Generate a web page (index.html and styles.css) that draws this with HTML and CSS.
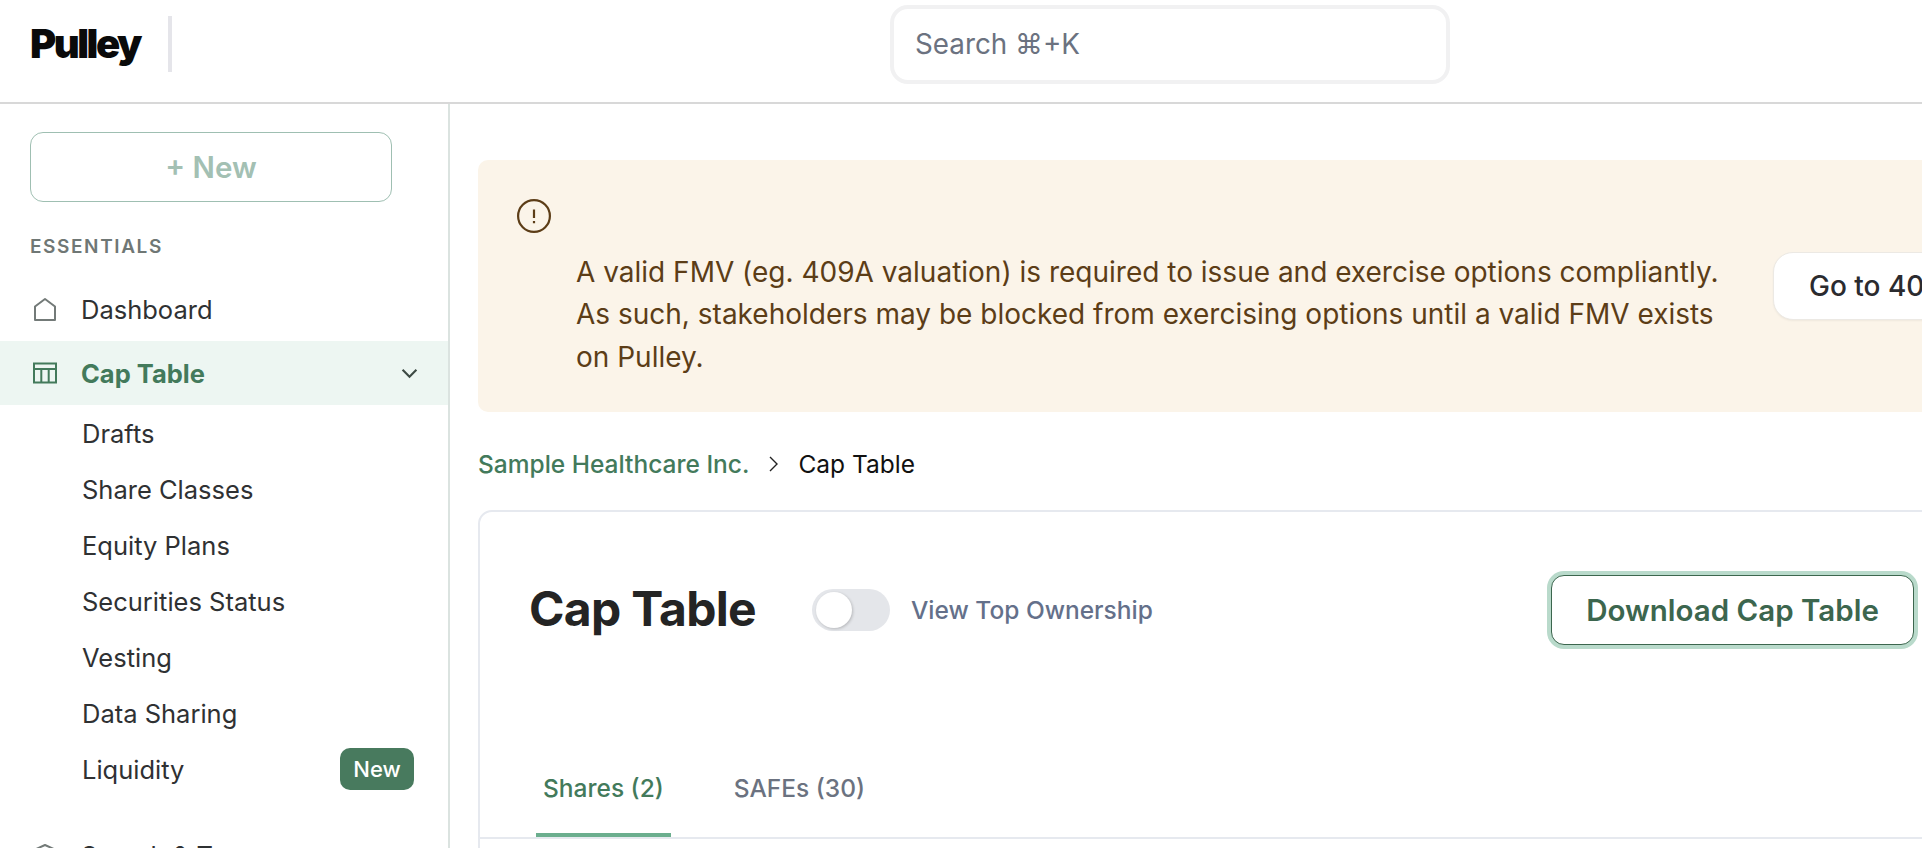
FILE: index.html
```html
<!DOCTYPE html>
<html lang="en">
<head>
<meta charset="utf-8">
<title>Pulley Cap Table</title>
<link rel="stylesheet" href="styles.css">
</head>
<body>
<header class="topbar">
  <div class="brand"><span class="logo">Pulley</span><span class="brand-rule"></span></div>
  <div class="search">Search ⌘+K</div>
</header>
<div class="shell">
  <aside class="sidebar">
    <button class="new-btn">+ New</button>
    <div class="nav-label">ESSENTIALS</div>
    <a class="nav-row first">
      <svg class="nav-icon" viewBox="0 0 24 24" fill="none" stroke="#737a78" stroke-width="2" stroke-linejoin="round"><path d="M2 23V9.500L12 2l10 7.500V23z"/></svg>
      <span>Dashboard</span>
    </a>
    <a class="nav-row active">
      <svg class="nav-icon" viewBox="0 0 24 21" fill="none" stroke="#437a5b" stroke-width="2"><path d="M1 1h22v19H1zM1 6.500h22M8.300 6.500V20M15.700 6.500V20"/></svg>
      <span>Cap Table</span>
      <svg class="chev" viewBox="0 0 16 10" fill="none" stroke="#3d4a44" stroke-width="2"><path d="M1.500 1.500 8 8l6.500-6.500"/></svg>
    </a>
    <ul class="sub">
      <li>Drafts</li>
      <li>Share Classes</li>
      <li>Equity Plans</li>
      <li>Securities Status</li>
      <li>Vesting</li>
      <li>Data Sharing</li>
      <li>Liquidity<span class="badge">New</span></li>
    </ul>
    <a class="nav-row next">
      <svg class="nav-icon" viewBox="0 0 24 24" fill="none" stroke="#737a78" stroke-width="2" stroke-linejoin="round"><path d="M12 2 1 7l11 5 11-5zM5 10v7l7 4 7-4v-7"/></svg>
      <span>Search &amp; Tax</span>
    </a>
  </aside>
  <main class="main">
    <section class="banner">
      <svg class="banner-icon" viewBox="0 0 34 34" fill="none" stroke="#5c3d17" stroke-width="2.200"><circle cx="17" cy="17" r="15.900"/><path d="M17 10.500v8.500M17 22v2.200"/></svg>
      <div class="banner-row">
        <p class="banner-text">A valid FMV (eg. 409A valuation) is required to issue and exercise options compliantly. As such, stakeholders may be blocked from exercising options until a valid FMV exists on Pulley.</p>
        <button class="banner-btn">Go to 409A</button>
      </div>
    </section>
    <nav class="crumbs">
      <a class="crumb-link">Sample Healthcare Inc.</a>
      <svg class="crumb-chev" viewBox="0 0 9 16" fill="none" stroke="#222" stroke-width="1.400"><path d="M1 1l7 7-7 7"/></svg>
      <span class="crumb-cur">Cap Table</span>
    </nav>
    <section class="card">
      <div class="card-head">
        <div class="title-group">
          <h1 class="title">Cap Table</h1>
          <span class="toggle"><span class="knob"></span></span>
          <span class="toggle-label">View Top Ownership</span>
        </div>
        <button class="download">Download Cap Table</button>
      </div>
      <div class="tabs">
        <span class="tab on">Shares (2)</span>
        <span class="tab">SAFEs (30)</span>
      </div>
    </section>
  </main>
</div>
</body>
</html>
```
FILE: styles.css
```css
* { box-sizing: border-box; }
html, body { margin: 0; height: 100%; overflow: hidden; background: #fff; }
body { font-family: Inter, "Liberation Sans", sans-serif; color: #2f3133; width: 1922px; height: 848px; }
button { font-family: inherit; cursor: pointer; }

.topbar { height: 104px; border-bottom: 2px solid #d8d8d8; display: flex; align-items: flex-start; }
.brand { display: flex; align-items: flex-start; padding: 16px 0 0 30px; }
.logo { font-weight: 900; font-size: 40px; letter-spacing: -2.500px; color: #0a0a0a; line-height: 56px; width: 138px; }
.brand-rule { width: 4px; height: 56px; background: #e5e5ea; }
.search { margin: 5px 0 0 718px; width: 560px; height: 79px; border: 4px solid #f1f1f2; border-radius: 18px; padding: 0 21px 2px; display: flex; align-items: center; font-size: 27.800px; color: #6b7280; }

.shell { display: flex; height: 744px; }
.sidebar { width: 450px; flex: none; border-right: 2px solid #dbe3e0; padding-top: 28px; overflow: hidden; }
.new-btn { display: block; margin-left: 30px; width: 362px; height: 70px; background: #fff; border: 1.500px solid #9fbfb2; border-radius: 13px; font-size: 29.500px; font-weight: 600; color: #a3c0b3; }
.nav-label { margin: 34px 0 0 30px; font-size: 19px; font-weight: 600; letter-spacing: 1.600px; color: #6f7775; line-height: 22px; }
.nav-row { display: flex; align-items: center; height: 64px; padding-left: 33px; font-size: 25.500px; color: #2f3133; }
.nav-row.first { margin-top: 19px; }
.nav-icon { width: 24px; height: 24px; margin-right: 24px; flex: none; }
.nav-row.active { background: #edf6f2; color: #437a5b; font-weight: 700; }
.chev { width: 17px; height: 11px; margin-left: auto; margin-right: 30px; }
.sub { list-style: none; margin: 0; padding: 0 0 0 82px; font-size: 25.500px; color: #2f3133; }
.sub li { height: 56px; display: flex; align-items: center; padding-right: 34px; justify-content: space-between; }
.badge { background: #487a5e; color: #fff; font-size: 22px; font-weight: 500; width: 74px; height: 42px; border-radius: 10px; display: flex; align-items: center; justify-content: center; }
.nav-row.next { margin-top: 26px; }

.main { flex: 1; min-width: 0; padding: 56px 0 0 28px; overflow: hidden; }
.banner { width: 1486px; height: 252px; background: #fbf4e9; border-radius: 10px; padding: 39px 0 0 39px; color: #5c3d17; }
.banner-icon { width: 34px; height: 34px; display: block; }
.banner-row { display: flex; align-items: flex-start; margin-top: 18px; padding-left: 59px; }
.banner-text { margin: 0; width: 1150px; font-size: 28px; line-height: 42.400px; }
.banner-btn { margin-left: 47px; margin-top: 1px; width: 180px; height: 68px; background: #fff; border: 1.500px solid #ece9e4; border-radius: 20px; font-size: 28px; font-weight: 500; color: #2b2b2f; text-align: left; padding-left: 35px; white-space: nowrap; box-shadow: 0 1px 2px rgba(0,0,0,.05); }

.crumbs { display: flex; align-items: center; height: 52px; margin-top: 26px; font-size: 24.500px; }
.crumb-link { color: #437a5b; font-weight: 500; }
.crumb-chev { width: 9px; height: 16px; margin: 0 20px; }
.crumb-cur { color: #111; }

.card { width: 1486px; margin-top: 20px; height: 500px; border: 2px solid #e6e9ef; border-radius: 14px; }
.card-head { display: flex; align-items: center; justify-content: space-between; padding: 63px 48px 0 49px; }
.title-group { display: flex; align-items: center; }
.title { margin: 0 0 3px; font-size: 48px; font-weight: 700; color: #242424; letter-spacing: -0.700px; }
.toggle { width: 78px; height: 42px; background: #e4e6ea; border-radius: 21px; margin-left: 56px; position: relative; display: block; }
.knob { position: absolute; left: 4px; top: 3px; width: 36px; height: 36px; border-radius: 50%; background: #fff; box-shadow: 1px 1px 3px rgba(0,0,0,.2); }
.toggle-label { margin-left: 21px; font-size: 24.500px; font-weight: 500; color: #64708a; }
.download { width: 363px; height: 70px; background: #fff; border: 1px solid #3c664e; border-radius: 13px; box-shadow: 0 0 0 4px #b9dacb; font-size: 29.500px; font-weight: 600; color: #3c664e; }

.tabs { display: flex; margin-top: 108px; height: 86px; border-bottom: 2px solid #e6e9ef; padding-left: 56px; }
.tab { height: 84px; padding: 0 7px 10px; margin-right: 56px; display: flex; align-items: center; font-size: 24.500px; font-weight: 500; color: #6b7280; border-bottom: 4px solid transparent; }
.tab.on { color: #437a5b; border-bottom-color: #6bae8e; }
```
